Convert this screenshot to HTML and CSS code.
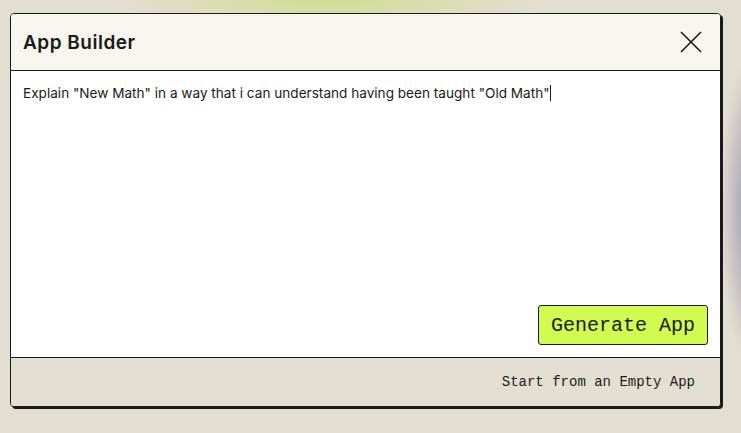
FILE: index.html
```html
<!DOCTYPE html>
<html>
<head>
<meta charset="utf-8">
<link rel="stylesheet" href="styles.css">
</head>
<body>
<div class="backdrop">
  <div class="modal">
    <div class="modal-header">
      <h1 class="title">App Builder</h1>
      <button class="close" aria-label="Close">
        <svg width="24" height="24" viewBox="0 0 24 24"><path d="M2 2 L22 22 M22 2 L2 22" stroke="#1a1a1a" stroke-width="1.6" fill="none"/></svg>
      </button>
    </div>
    <div class="modal-body">
      <div class="prompt">Explain "New Math" in a way that i can understand having been taught "Old Math"<span class="caret"></span></div>
      <div class="actions">
        <button class="generate">Generate App</button>
      </div>
    </div>
    <div class="modal-footer">
      <span class="empty">Start from an Empty App</span>
    </div>
  </div>
</div>
</body>
</html>
```
FILE: styles.css
```css
html, body {
  margin: 0;
  padding: 0;
  width: 741px;
  height: 433px;
  overflow: hidden;
}
body {
  background: #e4ddd1;
  font-family: "Inter", "Noto Sans", sans-serif;
}
.backdrop {
  width: 741px;
  height: 433px;
  box-sizing: border-box;
  padding: 13px 0 0 10px;
  background:
    radial-gradient(ellipse 210px 32px at 330px 0px, rgba(205,222,140,0.95), rgba(205,222,140,0) 100%),
    radial-gradient(ellipse 28px 150px at 748px 210px, rgba(150,150,170,0.9), rgba(150,150,170,0) 100%),
    #e4ddd1;
}
.modal {
  width: 711px;
  height: 394px;
  box-sizing: border-box;
  border: 1px solid #1a1a1a;
  border-radius: 4px;
  box-shadow: 2px 2px 0 #1a1a1a;
  display: flex;
  flex-direction: column;
  overflow: hidden;
  background: #fff;
}
.modal-header {
  height: 57px;
  flex: none;
  background: #f6f5ee;
  border-bottom: 1px solid #1a1a1a;
  display: flex;
  align-items: center;
  justify-content: space-between;
  padding: 0 17px 0 12px;
  box-sizing: border-box;
}
.title {
  margin: 0;
  font-size: 19px;
  font-weight: 600;
  color: #1a1a1a;
  letter-spacing: 0.5px;
}
.close {
  background: none;
  border: none;
  padding: 0;
  width: 24px;
  height: 24px;
  display: flex;
}
.modal-body {
  flex: 1;
  display: flex;
  flex-direction: column;
  justify-content: space-between;
  padding: 14px 12px 12px 12px;
  box-sizing: border-box;
}
.prompt {
  font-size: 13.6px;
  color: #1a1a1a;
  line-height: 16px;
}
.caret {
  display: inline-block;
  width: 1px;
  height: 16px;
  background: #1a1a1a;
  vertical-align: -3px;
}
.actions {
  display: flex;
  justify-content: flex-end;
}
.generate {
  font-family: "Liberation Mono", "DejaVu Sans Mono", monospace;
  font-size: 20px;
  white-space: nowrap;
  color: #1a1a1a;
  background: #d1fb4e;
  border: 1px solid #1a1a1a;
  border-radius: 3px;
  height: 40px;
  padding: 0 12px;
}
.modal-footer {
  height: 49px;
  flex: none;
  background: #e4ded2;
  border-top: 1px solid #1a1a1a;
  box-sizing: border-box;
  display: flex;
  align-items: center;
  justify-content: flex-end;
  padding: 0 25px 0 0;
}
.empty {
  font-family: "Liberation Mono", "DejaVu Sans Mono", monospace;
  font-size: 14px;
  color: #1a1a1a;
}
```
